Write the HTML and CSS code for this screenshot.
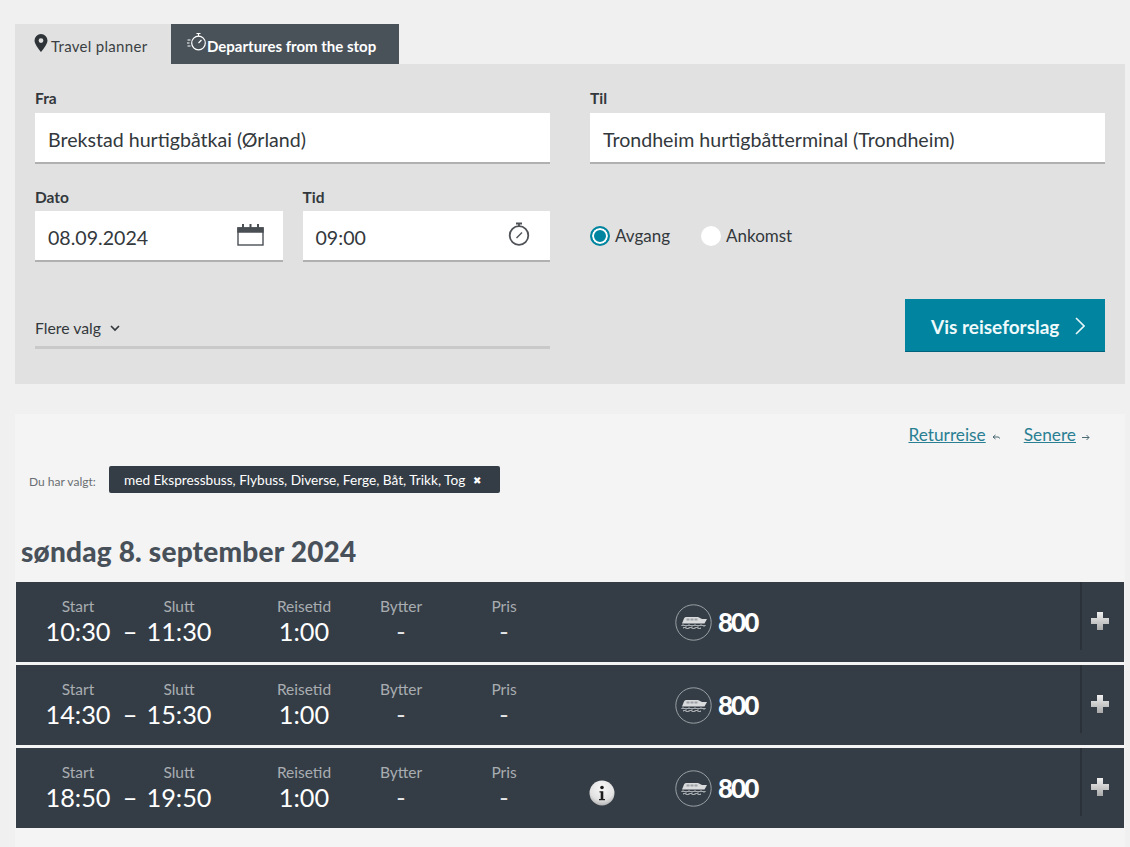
FILE: index.html
```html
<!DOCTYPE html>
<html lang="no">
<head>
<meta charset="utf-8">
<title>Travel planner</title>
<link rel="stylesheet" href="styles.css">
</head>
<body>
<svg class="defs" width="0" height="0" aria-hidden="true">
  <defs>
    <linearGradient id="plusGrad" x1="0" y1="0" x2="0" y2="1"><stop offset="0" stop-color="#f0f0f0"/><stop offset="1" stop-color="#a9a9a9"/></linearGradient>
    <radialGradient id="infoGrad" cx="0.5" cy="0.3" r="0.75"><stop offset="0" stop-color="#f8f8f8"/><stop offset="0.65" stop-color="#e2e2e2"/><stop offset="1" stop-color="#a8a8a8"/></radialGradient>
    <symbol id="boat" viewBox="0 0 37 37">
      <circle cx="18.5" cy="18.5" r="17.7" fill="none" stroke="#9aa0a5" stroke-width="1"/>
      <path d="M7 19.5 9 14.5 Q9.500 13 11 13 H23 L27 15 H32 L29.500 19.500 Z" fill="#d9dadb"/>
      <path d="M11.500 14.500h3v2h-3zM15.500 14.500h3v2h-3zM19.500 14.500h3v2h-3z" fill="#9aa0a5"/>
      <path d="M6.500 21.500q1.500-1 3 0t3 0 3 0 3 0 3 0 3 0 3 0 3 0M8 24q1.500-1 3 0t3 0 3 0 3 0 3 0 3 0" fill="none" stroke="#d9dadb" stroke-width="1"/>
    </symbol>
    <symbol id="plus" viewBox="0 0 18 18">
      <path d="M6 0h6v6h6v6h-6v6H6v-6H0V6h6z" fill="url(#plusGrad)"/>
    </symbol>
  </defs>
</svg>

<main class="page">
  <nav class="tabs">
    <div class="tab tab-active">
      <svg class="tab-pin" viewBox="0 0 14 18"><path fill-rule="evenodd" d="M7 0a6.500 6.500 0 0 1 6.500 6.500C13.500 10.500 7 18 7 18S.5 10.500.5 6.500A6.500 6.500 0 0 1 7 0zm0 4.200a2.400 2.400 0 1 0 0 4.800 2.400 2.400 0 0 0 0-4.800z" fill="#2f3439"/></svg>
      <span>Travel planner</span>
    </div>
    <div class="tab tab-dark">
      <svg class="tab-watch" viewBox="0 0 20 20" fill="none" stroke="#fff" stroke-width="1.200"><circle cx="11.500" cy="11" r="6.800"/><path d="M9.500 1.500h4M11.500 1.500v2.700M11.500 11l3-3M0.500 8h3M0 11h2.500M0.500 14h3"/></svg>
      <span>Departures from the stop</span>
    </div>
  </nav>

  <form class="panel">
    <div class="form-cols">
      <div class="form-col">
        <label class="field">
          <span class="field-label">Fra</span>
          <span class="input">Brekstad hurtigbåtkai (Ørland)</span>
        </label>
        <div class="field-pair">
          <label class="field">
            <span class="field-label">Dato</span>
            <span class="input input-icon">08.09.2024
              <svg class="cal" viewBox="0 0 27 24" fill="none" stroke="#4a4f54" stroke-width="1.400"><rect x="1" y="6" width="25" height="17"/><path d="M1 6h25v4H1z" fill="#4a4f54"/><path d="M6 2v5M13.500 2v5M21 2v5" stroke-width="2"/></svg>
            </span>
          </label>
          <label class="field">
            <span class="field-label">Tid</span>
            <span class="input input-icon">09:00
              <svg class="watch" viewBox="0 0 22 24" fill="none" stroke="#4f5357" stroke-width="1.800"><circle cx="11" cy="13.500" r="9.300"/><path d="M8 1.500h6M11 1.500v3"/><path d="M8.500 16 14 10.500" stroke-width="1.500"/></svg>
            </span>
          </label>
        </div>
        <div class="more">
          <span>Flere valg</span>
          <svg class="more-chev" viewBox="0 0 10 7" fill="none" stroke="#33383c" stroke-width="1.700"><path d="M1 1l4 4 4-4"/></svg>
        </div>
      </div>
      <div class="form-col">
        <label class="field">
          <span class="field-label">Til</span>
          <span class="input">Trondheim hurtigbåtterminal (Trondheim)</span>
        </label>
        <div class="radios">
          <span class="radio radio-on"></span><span class="radio-text">Avgang</span>
          <span class="radio radio-off"></span><span class="radio-text">Ankomst</span>
        </div>
        <div class="submit-row">
          <button class="submit" type="button">Vis reiseforslag
            <svg class="submit-chev" viewBox="0 0 10 18" fill="none" stroke="#e9f6f9" stroke-width="1.600"><path d="M1 1l8 8-8 8"/></svg>
          </button>
        </div>
      </div>
    </div>
  </form>

  <section class="results">
    <div class="links">
      <a class="link">Returreise</a>
      <svg class="mini mini-back" viewBox="0 0 8 7" fill="none" stroke="#4a6a74" stroke-width="1"><path d="M3.500 1 1 3l2.500 2M1 3h5q1.500 0 1.500 1.500"/></svg>
      <a class="link link-later">Senere</a>
      <svg class="mini" viewBox="0 0 8 7" fill="none" stroke="#4a6a74" stroke-width="1"><path d="M0 3.500h7M4.500 1 7 3.500 4.500 6"/></svg>
    </div>
    <div class="chosen">
      <span class="chosen-label">Du har valgt:</span>
      <span class="chip">med Ekspressbuss, Flybuss, Diverse, Ferge, Båt, Trikk, Tog<span class="chip-x">✖</span></span>
    </div>
    <h2 class="day">søndag 8. september 2024</h2>

    <div class="trip">
      <div class="cell c-start"><span class="lbl">Start</span><span class="val">10:30</span></div>
      <div class="cell c-dash"><span class="lbl">&nbsp;</span><span class="val">–</span></div>
      <div class="cell c-end"><span class="lbl">Slutt</span><span class="val">11:30</span></div>
      <div class="cell c-dur"><span class="lbl">Reisetid</span><span class="val">1:00</span></div>
      <div class="cell c-chg"><span class="lbl">Bytter</span><span class="val">-</span></div>
      <div class="cell c-price"><span class="lbl">Pris</span><span class="val">-</span></div>
      <div class="c-info"></div>
      <svg class="boat"><use href="#boat"/></svg>
      <span class="line">800</span>
      <div class="expand"><svg class="plus"><use href="#plus"/></svg></div>
    </div>
    <div class="trip">
      <div class="cell c-start"><span class="lbl">Start</span><span class="val">14:30</span></div>
      <div class="cell c-dash"><span class="lbl">&nbsp;</span><span class="val">–</span></div>
      <div class="cell c-end"><span class="lbl">Slutt</span><span class="val">15:30</span></div>
      <div class="cell c-dur"><span class="lbl">Reisetid</span><span class="val">1:00</span></div>
      <div class="cell c-chg"><span class="lbl">Bytter</span><span class="val">-</span></div>
      <div class="cell c-price"><span class="lbl">Pris</span><span class="val">-</span></div>
      <div class="c-info"></div>
      <svg class="boat"><use href="#boat"/></svg>
      <span class="line">800</span>
      <div class="expand"><svg class="plus"><use href="#plus"/></svg></div>
    </div>
    <div class="trip">
      <div class="cell c-start"><span class="lbl">Start</span><span class="val">18:50</span></div>
      <div class="cell c-dash"><span class="lbl">&nbsp;</span><span class="val">–</span></div>
      <div class="cell c-end"><span class="lbl">Slutt</span><span class="val">19:50</span></div>
      <div class="cell c-dur"><span class="lbl">Reisetid</span><span class="val">1:00</span></div>
      <div class="cell c-chg"><span class="lbl">Bytter</span><span class="val">-</span></div>
      <div class="cell c-price"><span class="lbl">Pris</span><span class="val">-</span></div>
      <div class="c-info">
        <svg class="info" viewBox="0 0 26 26"><circle cx="13" cy="13" r="12.500" fill="url(#infoGrad)"/><circle cx="13" cy="7.500" r="1.800" fill="#1c1c1c"/><path d="M10.500 11.200h3.800v7.800h1.700v1.300H10V19h1.700v-6.500h-1.200z" fill="#1c1c1c"/></svg>
      </div>
      <svg class="boat"><use href="#boat"/></svg>
      <span class="line">800</span>
      <div class="expand"><svg class="plus"><use href="#plus"/></svg></div>
    </div>
  </section>
</main>
</body>
</html>
```

FILE: styles.css
```css
* { box-sizing: border-box; }
html, body { margin: 0; padding: 0; }
body {
  width: 1130px;
  height: 847px;
  overflow: hidden;
  background: #f0f0f0;
  font-family: "Lato", "Noto Sans", sans-serif;
  color: #33383c;
}
.defs { position: absolute; }
.page { padding: 24px 5px 0 15px; }

/* Tabs */
.tabs { display: flex; height: 40px; }
.tab { display: flex; align-items: center; padding-top: 4px; font-size: 15px; }
.tab-active { width: 156px; background: #e1e1e1; padding-left: 19px; color: #3a3f43; letter-spacing: 0.3px; }
.tab-dark { width: 228px; background: #495259; color: #fff; font-weight: 700; padding-left: 16px; }
.tab-pin { width: 14px; height: 18px; margin: -7px 3px 0 0; }
.tab-watch { width: 20px; height: 20px; margin: -8px 0 0 0; }

/* Search panel */
.panel { height: 320px; background: #e1e1e1; padding: 24px 20px 0; }
.form-cols { display: flex; gap: 40px; }
.form-col { width: 515px; }
.field { display: block; }
.field-label { display: block; height: 25px; font-size: 15.5px; font-weight: 700; line-height: 20px; color: #33383c; }
.field-pair .field-label { height: 24px; line-height: 21px; }
.input {
  display: flex;
  align-items: center;
  justify-content: space-between;
  height: 51px;
  padding: 4px 13px 0;
  background: #fff;
  border-bottom: 2px solid #b0b0b0;
  font-size: 19.600px;
  color: #33383c;
}
.field-pair { display: flex; gap: 20px; margin-top: 23px; }
.field-pair .field { width: 248px; }
.cal { width: 27px; height: 24px; margin: -8px 6px 0 0; }
.watch { width: 22px; height: 24px; margin: -7px 7px 0 0; }
.more {
  display: flex;
  align-items: center;
  height: 37px;
  margin-top: 50px;
  padding-bottom: 4px;
  border-bottom: 3px solid #c9c9c9;
  font-size: 15.800px;
  color: #33383c;
}
.more-chev { width: 10px; height: 7px; margin: 3px 0 0 9px; }
.radios { display: flex; align-items: center; height: 25px; margin-top: 59px; font-size: 17px; color: #33383c; }
.radio { width: 20px; height: 20px; border-radius: 50%; background: #fff; margin: 1px 5px 0 0; }
.radio-on { border: 2px solid #00849f; background: #00849f; box-shadow: inset 0 0 0 2px #fff; }
.radio-off { margin-left: 31px; }
.submit-row { display: flex; justify-content: flex-end; margin-top: 51px; }
.submit {
  display: flex;
  align-items: center;
  justify-content: space-between;
  width: 200px;
  height: 53px;
  padding: 2px 20px 0 26px;
  background: #00849f;
  border: 0;
  border-bottom: 1px solid #00617a;
  color: #eef9fb;
  font: 700 19px "Lato", sans-serif;
}
.submit-chev { width: 10px; height: 18px; }

/* Results */
.results { margin-top: 30px; padding: 1px 0 19px 1px; width: 1110px; background: #f4f4f4; }
.links { display: flex; align-items: center; justify-content: flex-end; height: 38px; padding-right: 35px; font-size: 17.300px; }
.link { color: #2a7f93; text-decoration: underline; }
.link-later { margin-left: 24px; }
.mini { width: 8px; height: 7px; margin: 7px 0 0 6px; }
.chosen { display: flex; align-items: center; height: 27px; margin-top: 13px; padding-left: 13px; }
.chosen-label { width: 80px; font-size: 12px; color: #6a6e72; padding-top: 3px; }
.chip {
  display: flex;
  align-items: center;
  height: 27px;
  padding: 0 19px 0 15px;
  background: #343d46;
  border-radius: 2px;
  color: #fff;
  font-size: 13.650px;
}
.chip-x { margin-left: 8px; font-size: 10px; }
.day { margin: 0; padding: 40px 0 0 5px; height: 89px; font-size: 28px; line-height: 36px; font-weight: 900; color: #48515a; letter-spacing: 0.2px; }

.trip {
  display: flex;
  align-items: center;
  width: 1108px;
  height: 80px;
  margin-bottom: 3px;
  padding-left: 25px;
  background: #343d46;
  color: #fff;
}
.trip:last-child { margin-bottom: 0; }
.cell { display: flex; flex-direction: column; align-items: center; flex: none; padding-top: 1px; }
.lbl { font-size: 15.500px; line-height: 18px; color: #a9adb1; }
.val { font-size: 25.300px; line-height: 33px; color: #fff; }
.c-start { width: 64px; margin-left: 5px; margin-right: 5px; }
.c-dash { width: 30px; }
.c-end { width: 68px; }
.c-dur { width: 68px; margin-left: 57px; }
.c-chg { width: 60px; margin-left: 33px; }
.c-price { width: 60px; margin-left: 43px; }
.c-chg .val, .c-price .val { color: #e4e6e7; }
.c-info { width: 26px; height: 26px; margin: 0 0 0 55px; flex: none; position: relative; top: 5px; }
.info { display: block; width: 26px; height: 26px; }
.boat { width: 37px; height: 37px; margin-left: 60px; flex: none; }
.line { margin-left: 6px; font-size: 26px; font-weight: 900; color: #fff; letter-spacing: -2px; }
.expand {
  display: flex;
  align-items: center;
  justify-content: flex-start;
  width: 44px;
  height: 68px;
  margin: 0 0 12px auto;
  padding-left: 9px;
  border-left: 2px solid #2a3138;
}
.plus { width: 18px; height: 18px; margin-top: 10px; }
```
